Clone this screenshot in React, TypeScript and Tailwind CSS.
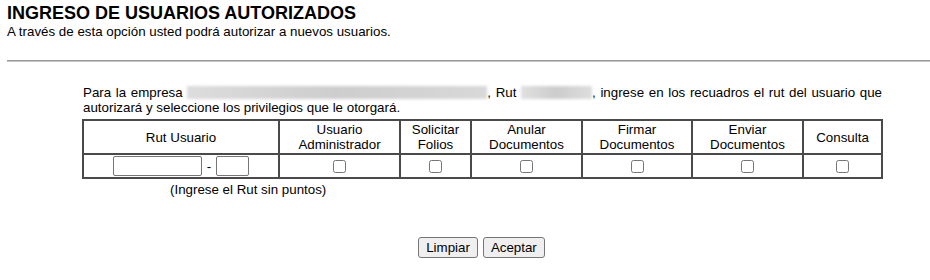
import { useState } from 'react';

const privilegios = [
  { key: 'admin', label: ['Usuario', 'Administrador'] },
  { key: 'folios', label: ['Solicitar', 'Folios'] },
  { key: 'anular', label: ['Anular', 'Documentos'] },
  { key: 'firmar', label: ['Firmar', 'Documentos'] },
  { key: 'enviar', label: ['Enviar', 'Documentos'] },
  { key: 'consulta', label: ['Consulta'] },
];

const colWidths = [196, 121, 71, 111, 110, 111, 79];

export default function App() {
  const [rut, setRut] = useState('');
  const [dv, setDv] = useState('');
  const [checks, setChecks] = useState<Record<string, boolean>>({});

  const limpiar = () => {
    setRut('');
    setDv('');
    setChecks({});
  };

  return (
    <div className="font-['Liberation_Sans',Arial,sans-serif] text-[13.33px] leading-[15px] text-black bg-white min-h-[280px]">
      <div className="px-[7px] pt-[3px]">
        <h1 className="text-[18px] leading-[21px] font-bold">INGRESO DE USUARIOS AUTORIZADOS</h1>
        <p>A través de esta opción usted podrá autorizar a nuevos usuarios.</p>
      </div>

      <div className="ml-[7px] mt-[21px] border-t border-[#9a9a9a] border-b border-b-[#c4c4c4]" />

      <div className="ml-[82px] w-[800px] mt-[23px]">
        <p className="text-justify pl-[1px]">
          Para la empresa{' '}
          <span className="inline-block w-[300px] h-[13px] align-[-2px] bg-gradient-to-r from-[#dcdcdc] via-[#cdcdcd] to-[#d8d8d8] blur-[1.5px]" />
          , Rut{' '}
          <span className="inline-block w-[71px] h-[13px] align-[-2px] bg-gradient-to-r from-[#e0e0e0] via-[#cccccc] to-[#dddddd] blur-[1.5px]" />
          , ingrese en los recuadros el rut del usuario que autorizará y seleccione los privilegios que le otorgará.
        </p>

        <table className="mt-[4px] w-[799px] table-fixed border-collapse border-2 border-[#4a4a4a]">
          <colgroup>
            {colWidths.map((w, i) => (
              <col key={i} style={{ width: w }} />
            ))}
          </colgroup>
          <thead>
            <tr className="h-[34px]">
              <th className="border-2 border-[#4a4a4a] font-normal text-center">Rut Usuario</th>
              {privilegios.map((p) => (
                <th key={p.key} className="border-2 border-[#4a4a4a] font-normal text-center">
                  {p.label.map((l) => (
                    <div key={l}>{l}</div>
                  ))}
                </th>
              ))}
            </tr>
          </thead>
          <tbody>
            <tr className="h-[24px]">
              <td className="border-2 border-[#4a4a4a] text-center p-0">
                <div className="flex items-center justify-center">
                  <input
                    type="text"
                    value={rut}
                    onChange={(e) => setRut(e.target.value)}
                    className="w-[89px] h-[20px] border border-[#767676] rounded-[2px] px-[2px] text-[13px]"
                  />
                  <span className="mx-[5px]">-</span>
                  <input
                    type="text"
                    value={dv}
                    onChange={(e) => setDv(e.target.value)}
                    className="w-[33px] h-[20px] border border-[#767676] rounded-[2px] px-[2px] text-[13px]"
                  />
                </div>
              </td>
              {privilegios.map((p) => (
                <td key={p.key} className="border-2 border-[#4a4a4a] text-center p-0">
                  <input
                    type="checkbox"
                    checked={!!checks[p.key]}
                    onChange={(e) => setChecks({ ...checks, [p.key]: e.target.checked })}
                    className="w-[13px] h-[13px] align-middle m-0"
                  />
                </td>
              ))}
            </tr>
          </tbody>
        </table>

        <p className="ml-[88px] mt-[3px]">(Ingrese el Rut sin puntos)</p>

        <div className="flex justify-center gap-[5px] mt-[40px] w-[799px]">
          <button
            onClick={limpiar}
            className="px-[7px] py-[2px] border border-[#767676] rounded-[3px] bg-[#efefef] text-[13.33px] leading-[15px]"
          >
            Limpiar
          </button>
          <button className="px-[7px] py-[2px] border border-[#767676] rounded-[3px] bg-[#efefef] text-[13.33px] leading-[15px]">
            Aceptar
          </button>
        </div>
      </div>
    </div>
  );
}
